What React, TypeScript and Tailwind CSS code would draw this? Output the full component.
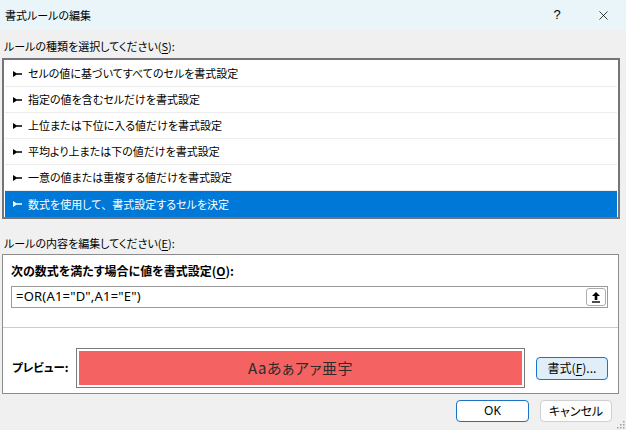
import React from 'react';
import { X } from 'lucide-react';

const jp = "[font-family:'Noto_Sans_CJK_JP','Noto_Sans',sans-serif] [font-feature-settings:'palt']";

const rules = [
  'セルの値に基づいてすべてのセルを書式設定',
  '指定の値を含むセルだけを書式設定',
  '上位または下位に入る値だけを書式設定',
  '平均より上または下の値だけを書式設定',
  '一意の値または重複する値だけを書式設定',
  '数式を使用して、書式設定するセルを決定',
];

function Marker({ color }: { color: string }) {
  return (
    <svg width="9" height="6" viewBox="0 0 9 6" className="shrink-0">
      <path d="M0 0 L0 6 L3.5 3.8 L9 3.8 L9 2.2 L3.5 2.2 Z" fill={color} />
    </svg>
  );
}

function Key({ children }: { children: React.ReactNode }) {
  return <span className="underline underline-offset-2">{children}</span>;
}

// keep the ideographic comma full width while the rest of the text uses proportional kana
function RuleText({ text }: { text: string }) {
  const parts = text.split('、');
  return (
    <span>
      {parts.map((p, i) => (
        <React.Fragment key={i}>
          {p}
          {i < parts.length - 1 && <span className="[font-feature-settings:normal]">、</span>}
        </React.Fragment>
      ))}
    </span>
  );
}

export default function App() {
  const selected = 5;
  return (
    <div className={`relative w-[626px] h-[430px] overflow-hidden bg-[#f0f0f0] text-[11px] text-black ${jp}`}>
      {/* title bar */}
      <div className="h-[30px] bg-[#e9f5f8] flex items-center pl-[5px]">
        <span className="flex-1">書式ルールの編集</span>
        <span className="w-[46px] text-center text-[13px] [font-family:'Liberation_Sans',sans-serif]">?</span>
        <span className="w-[46px] flex justify-center">
          <X className="w-[15px] h-[15px]" strokeWidth={1.2} />
        </span>
      </div>

      <div className="mt-[7px] h-[18px] leading-[18px] pl-[4px]">
        ルールの種類を選択してください(<Key>S</Key>):
      </div>

      {/* rule type list */}
      <div className="mt-[3px] ml-[2px] w-[618px] border-2 border-[#74747a] bg-white pt-[1px] px-[1px]">
        {rules.map((r, i) => (
          <div
            key={r}
            className={
              'h-[26px] flex items-center gap-[6px] pl-[8px] text-[11px] ' +
              (i === selected ? 'bg-[#0078d7] text-white' : 'border-b border-[#ececec]')
            }
          >
            <Marker color={i === selected ? '#ffffff' : '#000000'} />
            <RuleText text={r} />
          </div>
        ))}
      </div>

      <div className="mt-[15px] h-[18px] leading-[18px] pl-[4px]">
        ルールの内容を編集してください(<Key>E</Key>):
      </div>

      {/* rule description */}
      <div className="mt-[2px] ml-[2px] w-[617px] border border-[#8c8c8c] bg-white">
        <div className="pl-[8px] pr-[10px] pt-[7px] pb-[19px] border-b border-[#cccccc]">
          <div className="h-[18px] leading-[18px] font-bold text-[12px]">
            次の数式を満たす場合に値を書式設定(<Key>O</Key>):
          </div>
          <div className="mt-[6px] h-[22px] border border-[#9a9a9a] flex items-center pl-[4px] pr-[1px]">
            <span className="flex-1 text-[13px] tracking-[0.2px] [font-family:'Noto_Sans',sans-serif]">=OR(A1="D",A1="E")</span>
            <div className="w-[20px] h-[18px] border border-[#adadad] rounded-[3px] bg-white flex items-center justify-center">
              <svg width="10" height="12" viewBox="0 0 10 12">
                <path d="M5 1 L9 5 L6.3 5 L6.3 9 L3.7 9 L3.7 5 L1 5 Z" fill="#000" />
                <rect x="1" y="10.3" width="8" height="1.4" fill="#000" />
              </svg>
            </div>
          </div>
        </div>
        <div className="pl-[9px] pr-[10px] pt-[20px] pb-[5px] flex items-center">
          <span className="w-[64px] font-bold text-[11.5px]">プレビュー:</span>
          <div className="w-[449px] h-[40px] border border-[#7a7a7a] p-[2px] bg-white">
            <div className="h-full bg-[#f56262] flex items-center justify-center text-[15px] text-[#2b2b2b] tracking-[0.5px]">
              Aaあぁアァ亜宇
            </div>
          </div>
          <button className="ml-[11px] w-[72px] h-[23px] rounded-[4px] border border-[#1a73c7] bg-[#e0eef9] text-[12px]">
            書式(<Key>F</Key>)...
          </button>
        </div>
      </div>

      {/* footer buttons */}
      <div className="mt-[6px] pr-[14px] flex justify-end gap-[11px]">
        <button className="w-[73px] h-[22px] rounded-[4px] border border-[#1a73c7] bg-white text-[12px] [font-family:'Noto_Sans',sans-serif]">
          OK
        </button>
        <button className="w-[72px] h-[22px] rounded-[4px] border border-[#d0d0d0] bg-[#fdfdfd] text-[12px]">
          キャンセル
        </button>
      </div>

      {/* resize grip */}
      <svg width="10" height="10" viewBox="0 0 10 10" className="absolute right-[1px] bottom-[1px]">
        {[
          [8, 2],
          [5, 5],
          [8, 5],
          [2, 8],
          [5, 8],
          [8, 8],
        ].map(([x, y]) => (
          <rect key={`${x}-${y}`} x={x} y={y} width="1.5" height="1.5" fill="#a0a0a0" />
        ))}
      </svg>
    </div>
  );
}
